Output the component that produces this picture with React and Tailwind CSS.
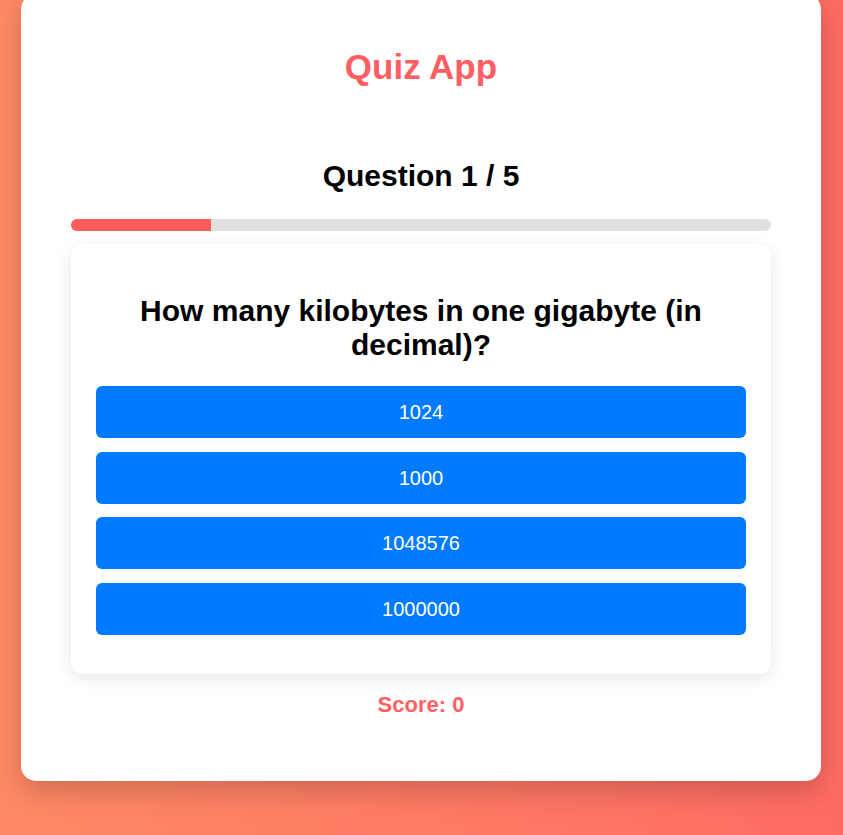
export default function App() {
  const options = ['1024', '1000', '1048576', '1000000']
  const total = 5
  const current = 1

  return (
    <div className="min-h-[835px] overflow-hidden bg-gradient-to-r from-[#ff8a65] to-[#ff6b63] font-['Liberation_Sans',Arial,sans-serif]">
      <div className="ml-[21px] -mt-[6px] w-[800px] rounded-[15px] bg-white px-[50px] pt-[53px] pb-[63px] text-center shadow-[0_10px_30px_rgba(0,0,0,0.2)]">
        <h1 className="text-[35px] font-bold leading-[40px] text-[#ff5e62]">Quiz App</h1>

        <h2 className="mt-[71px] text-[30px] font-bold leading-[36px] text-black">
          Question {current} / {total}
        </h2>

        <div className="mt-[25px] h-[12px] w-full overflow-hidden rounded-full bg-[#e0e0e0]">
          <div className="h-full bg-[#ff5c5c]" style={{ width: `${(current / total) * 100}%` }} />
        </div>

        <div className="mt-[13px] rounded-[12px] bg-white px-[25px] pt-[50px] pb-[39px] shadow-[0_4px_16px_rgba(0,0,0,0.1)]">
          <h3 className="text-[30px] font-bold leading-[34px] text-black">
            How many kilobytes in one gigabyte (in decimal)?
          </h3>
          <div className="mt-[24px] flex flex-col gap-[13.5px]">
            {options.map((opt) => (
              <button
                key={opt}
                className="h-[52px] w-full rounded-[6px] bg-[#007bff] text-[20px] text-white"
              >
                {opt}
              </button>
            ))}
          </div>
        </div>

        <p className="mt-[18px] text-[22px] font-bold leading-[26px] text-[#ff5e62]">Score: 0</p>
      </div>
    </div>
  )
}
